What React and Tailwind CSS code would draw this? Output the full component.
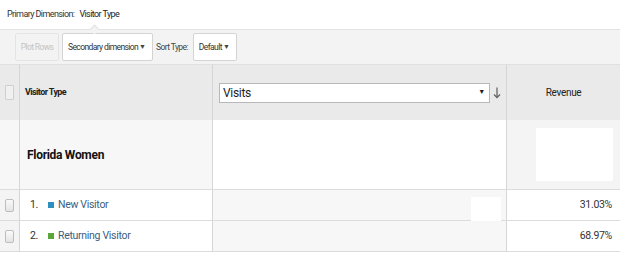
import React from "react"

const narrow = { fontFamily: 'Roboto, "Liberation Sans", Arial, sans-serif' }

function Checkbox() {
  return <div className="w-[9px] h-[13px] rounded-[2px] border border-[#bdbdbd] bg-gradient-to-b from-[#fafafa] to-[#e4e4e4]" />
}

function Caret() {
  return <span className="text-[7px] text-[#444] leading-none tracking-normal">▼</span>
}

const rows = [
  { n: "1.", label: "New Visitor", color: "bg-[#2d8fc0]", revenue: "31.03%" },
  { n: "2.", label: "Returning Visitor", color: "bg-[#5aa63a]", revenue: "68.97%" },
]

export default function App() {
  return (
    <div className="w-[620px] h-[265px] bg-white text-[#333] overflow-hidden" style={narrow}>
      {/* Primary dimension */}
      <div className="h-[29px] flex items-center pl-[7px] text-[9px] tracking-[-0.6px] text-[#333] whitespace-nowrap">
        <span>Primary Dimension:</span>
        <span className="ml-[5px] text-[#222]">Visitor Type</span>
      </div>

      {/* Toolbar */}
      <div className="relative h-[35px] bg-[#f3f3f3] border-t border-[#e2e2e2] flex items-center pl-[15px] text-[8.5px] tracking-[-0.6px] whitespace-nowrap">
        <div className="absolute left-[91px] -top-[4px] w-[7px] h-[7px] rotate-45 bg-[#f3f3f3] border-l border-t border-[#e2e2e2]" />
        <div className="h-[28px] w-[44px] flex items-center justify-center border border-[#e4e4e4] rounded-[2px] text-[#c4c4c4]">Plot Rows</div>
        <div className="ml-[3px] h-[28px] w-[91px] flex items-center justify-between pl-[5px] pr-[6px] bg-white border border-[#d4d4d4] rounded-[2px] text-[#333]">
          <span>Secondary dimension</span>
          <Caret />
        </div>
        <span className="ml-[3px] text-[#444]">Sort Type:</span>
        <div className="ml-[5px] h-[28px] w-[44px] flex items-center justify-between pl-[5px] pr-[6px] bg-white border border-[#d4d4d4] rounded-[2px] text-[#333]">
          <span>Default</span>
          <Caret />
        </div>
      </div>

      {/* Table */}
      <div className="grid grid-cols-[20px_193px_294px_113px] border-t border-[#e0e0e0]">
        {/* Header */}
        <div className="h-[55px] bg-[#eaeaea] border-r border-[#d6d6d6] flex items-center justify-center">
          <div className="w-[9px] h-[15px] border border-[#cfcfcf] bg-[#f0f0f0] rounded-[1px]" />
        </div>
        <div className="h-[55px] bg-[#eaeaea] border-r border-[#d6d6d6] flex items-center pl-[5px] text-[9px] tracking-[-0.6px] font-bold text-[#222]">
          Visitor Type
        </div>
        <div className="h-[55px] bg-[#eaeaea] border-r border-[#d6d6d6] flex items-center pl-[6px] pr-[5px]">
          <div className="flex-1 h-[20px] bg-white border border-[#b8b8b8] flex items-center justify-between pl-[3px] pr-[4px] text-[12px] tracking-[-0.3px] text-[#222]">
            <span>Visits</span>
            <span className="text-[7px] text-[#222]">▼</span>
          </div>
          <svg className="ml-[3px]" width="8" height="12" viewBox="0 0 8 12" fill="none" stroke="#666" strokeWidth="1.3">
            <path d="M4 0.5V10.5" />
            <path d="M1 7.5L4 10.5L7 7.5" />
          </svg>
        </div>
        <div className="h-[55px] bg-[#eaeaea] flex items-center justify-center text-[10px] tracking-[-0.3px] text-[#222]">Revenue</div>

        {/* Florida Women row */}
        <div className="h-[70px] bg-[#f7f7f7] border-r border-[#d6d6d6] border-b border-b-[#dcdcdc]" />
        <div className="h-[70px] bg-[#f7f7f7] border-r border-[#d6d6d6] border-b border-b-[#dcdcdc] flex items-center pl-[7px] text-[12px] tracking-[-0.3px] font-bold text-[#111]">
          Florida Women
        </div>
        <div className="h-[70px] bg-white border-r border-[#d6d6d6] border-b border-b-[#dcdcdc]" />
        <div className="h-[70px] bg-[#f4f4f4] border-b border-[#dcdcdc] flex items-center pl-[29px]">
          <div className="w-[77px] h-[53px] bg-white" />
        </div>

        {/* Data rows */}
        {rows.map((r, i) => (
          <React.Fragment key={r.n}>
            <div className="h-[31px] bg-[#f4f4f4] border-r border-[#d6d6d6] border-b border-b-[#dcdcdc] flex items-center justify-center">
              <Checkbox />
            </div>
            <div className="h-[31px] bg-white border-r border-[#d6d6d6] border-b border-b-[#dcdcdc] flex items-center pl-[10px] text-[10.5px] tracking-[-0.3px]">
              <span className="w-[18px] text-[#333]">{r.n}</span>
              <span className={`w-[6px] h-[6px] ${r.color}`} />
              <span className="ml-[4px] text-[#3b5d7f]">{r.label}</span>
            </div>
            <div className="relative h-[31px] bg-[#f7f7f7] border-r border-[#d6d6d6] border-b border-b-[#dcdcdc]">
              {i === 0 && <div className="absolute left-[258px] top-[7px] w-[30px] h-[49px] bg-white" />}
            </div>
            <div className="h-[31px] bg-white border-b border-[#dcdcdc] flex items-center justify-end pr-[8px] text-[10.5px] tracking-[-0.3px] text-[#333]">
              {r.revenue}
            </div>
          </React.Fragment>
        ))}
      </div>
    </div>
  )
}
